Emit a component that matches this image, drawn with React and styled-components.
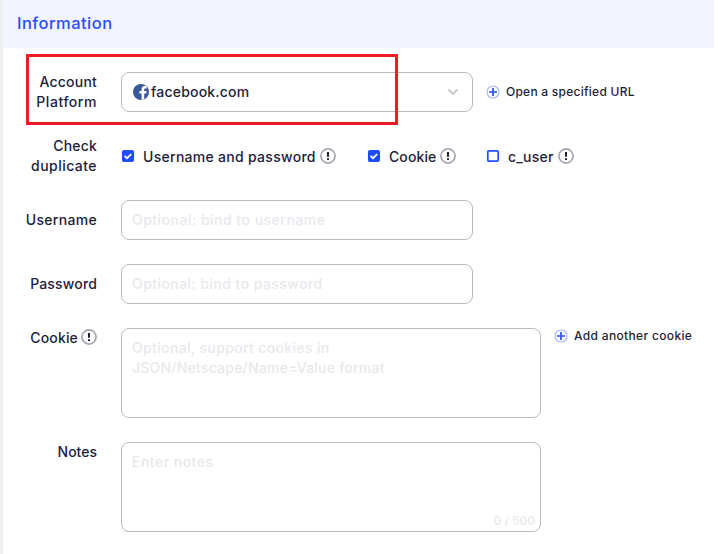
import React from "react";
import styled, { createGlobalStyle } from "styled-components";

const GlobalStyle = createGlobalStyle`
  * { box-sizing: border-box; }
  html, body { margin: 0; padding: 0; background: #fff; overflow: hidden; }
`;

const Page = styled.div`
  position: relative;
  width: 718px;
  height: 554px;
  border-left: 3px solid #f0f0f1;
  background: #fff;
  color: #1d1d3b;
  font-family: Inter, "Open Sans", sans-serif;
  font-size: 14px;
  font-weight: 500;
  line-height: 20px;
  overflow: hidden;
`;

const Header = styled.header`
  display: flex;
  align-items: center;
  width: 711px;
  height: 48px;
  padding: 0 14px 2px;
  background: #f2f5ff;
  color: #2a4bff;
  font-size: 16.5px;
`;

const Form = styled.form`
  display: flex;
  flex-direction: column;
  gap: 24px;
  padding-top: 24px;
`;

const Row = styled.div`
  display: flex;
  align-items: ${(p) => (p.$top ? "flex-start" : "center")};
  height: ${(p) => p.$height || 40}px;
`;

const Label = styled.div`
  display: flex;
  flex-direction: column;
  align-items: flex-end;
  width: 94px;
  margin-right: 24px;
`;

const InfoLabel = styled(Label)`
  flex-direction: row;
  justify-content: flex-end;
  align-items: flex-start;
  gap: 3px;

  svg {
    margin-top: 1px;
  }
`;

const Text = styled.span`
  white-space: nowrap;
  letter-spacing: ${(p) => p.$spacing || 0}px;
`;

const Select = styled.div`
  display: flex;
  align-items: center;
  gap: 2px;
  width: 352px;
  height: 40px;
  padding: 0 13px 0 11px;
  border: 1px solid #b9b9c4;
  border-radius: 8px;
`;

const Chevron = styled.svg`
  margin-left: auto;
`;

const Field = styled.div`
  display: flex;
  flex-direction: column;
  width: ${(p) => (p.$area ? 420 : 352)}px;
  height: ${(p) => (p.$area ? 90 : 40)}px;
  padding: 9px 10px;
  border: 1px solid #b9b9c4;
  border-radius: 8px;
  color: #e8e8ec;
`;

const NotesField = styled(Field)`
  justify-content: space-between;
  padding: 9px 5px 1px 10px;
`;

const Counter = styled.span`
  align-self: flex-end;
  font-size: 12px;
  line-height: 18px;
`;

const Action = styled.div`
  display: flex;
  align-items: center;
  gap: 6px;
  height: 16px;
  margin-left: 13px;
  font-size: 12px;
  line-height: 16px;
`;

const Checks = styled.div`
  display: flex;
  align-items: center;
`;

const Check = styled.div`
  display: flex;
  align-items: center;
  width: ${(p) => p.$width}px;
`;

const CheckText = styled(Text)`
  margin: 1px 4px 0 8px;
`;

const Highlight = styled.div`
  position: absolute;
  left: 23px;
  top: 54px;
  width: 372px;
  height: 71px;
  border: 3px solid #ed1c24;
`;

const Info = () => (
  <svg width="16" height="16" viewBox="0 0 16 16" fill="none">
    <circle cx="8" cy="8" r="7.1" stroke="#a5a5b1" strokeWidth="1.7" />
    <path d="M8 4v4.8M8 10.2v1.8" stroke="#1d1d3b" strokeWidth="2" />
  </svg>
);

const Plus = () => (
  <svg width="14" height="14" viewBox="0 0 14 14" fill="none">
    <circle cx="7" cy="7" r="6" stroke="#a8baff" strokeWidth="1.2" />
    <path d="M3 7h8M7 3v8" stroke="#2a4bff" strokeWidth="1.7" />
  </svg>
);

const Box = ({ checked }) => (
  <svg width="14" height="14" viewBox="0 0 14 14" fill="none">
    <rect x="1.8" y="1.8" width="10.4" height="10.4" rx="1.3" fill={checked ? "#1f4dff" : "#fff"} stroke="#1f4dff" strokeWidth="1.7" />
    {checked && <path d="M3.6 6.9l2.4 2.3 4.3-4.2" stroke="#fff" strokeWidth="1.7" />}
  </svg>
);

const Facebook = () => (
  <svg width="16" height="16" viewBox="0 0 16 16">
    <circle cx="8" cy="8" r="8" fill="#3b5998" />
    <path d="M8.6 15.9V9.6H6.4V7.1h2.2V5.3c0-2.1 1.3-3.2 3.2-3.2.8 0 1.5.1 1.8.1v2.2h-1.2c-1 0-1.2.5-1.2 1.2v1.5h2.4l-.4 2.5h-2v5.7c-.8.4-1.7.6-2.6.6z" fill="#fff" />
  </svg>
);

export default function App() {
  return (
    <>
      <GlobalStyle />
      <Page>
        <Header><Text $spacing={0.46}>Information</Text></Header>
        <Form>
          <Row>
            <Label>
              <Text $spacing={0.2}>Account</Text>
              <Text $spacing={0.55}>Platform</Text>
            </Label>
            <Select>
              <Facebook />
              <Text $spacing={0.2}>facebook.com</Text>
              <Chevron width="12" height="8" viewBox="0 0 12 8" fill="none">
                <path d="M1.5 1.5L6 6l4.5-4.5" stroke="#c5c5cb" strokeWidth="1.8" />
              </Chevron>
            </Select>
            <Action><Plus /><Text $spacing={0.25}>Open a specified URL</Text></Action>
          </Row>
          <Row>
            <Label>
              <Text $spacing={0.2}>Check</Text>
              <Text $spacing={0.46}>duplicate</Text>
            </Label>
            <Checks>
              <Check $width={246}><Box checked /><CheckText $spacing={0.29}>Username and password</CheckText><Info /></Check>
              <Check $width={119}><Box checked /><CheckText $spacing={0.1}>Cookie</CheckText><Info /></Check>
              <Check $width={100}><Box /><CheckText $spacing={0.25}>c_user</CheckText><Info /></Check>
            </Checks>
          </Row>
          <Row>
            <Label><Text $spacing={0.3}>Username</Text></Label>
            <Field><Text $spacing={0.49}>Optional: bind to username</Text></Field>
          </Row>
          <Row>
            <Label><Text $spacing={0.15}>Password</Text></Label>
            <Field><Text $spacing={0.44}>Optional: bind to password</Text></Field>
          </Row>
          <Row $top $height={90}>
            <InfoLabel><Text $spacing={0.15}>Cookie</Text><Info /></InfoLabel>
            <Field $area>
              <Text $spacing={0.36}>Optional, support cookies in</Text>
              <Text $spacing={0.23}>JSON/Netscape/Name=Value format</Text>
            </Field>
            <Action><Plus /><Text $spacing={0.34}>Add another cookie</Text></Action>
          </Row>
          <Row $top $height={90}>
            <Label><Text>Notes</Text></Label>
            <NotesField $area>
              <Text $spacing={0.48}>Enter notes</Text>
              <Counter>0 / 500</Counter>
            </NotesField>
          </Row>
        </Form>
        <Highlight />
      </Page>
    </>
  );
}
